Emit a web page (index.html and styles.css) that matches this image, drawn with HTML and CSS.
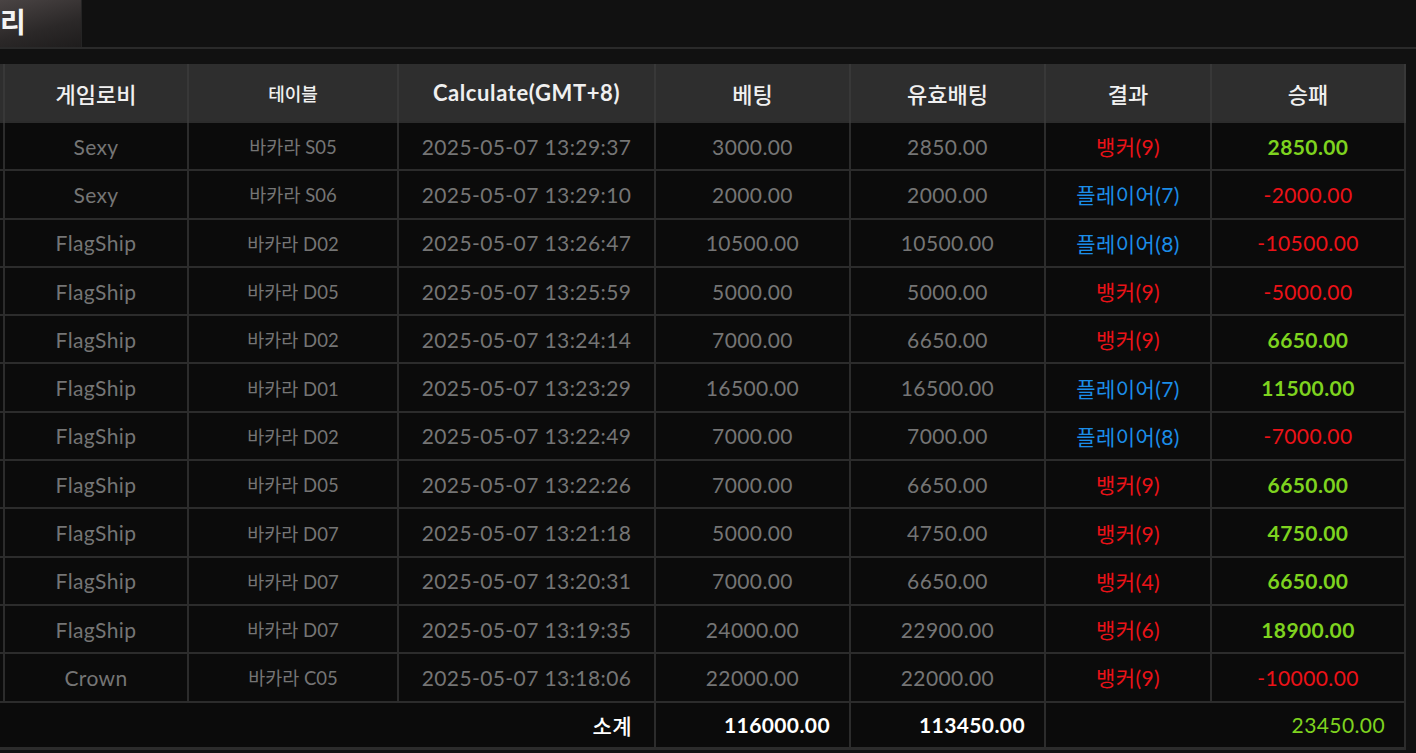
FILE: index.html
```html
<html>
    <head>
        <link rel="stylesheet" href="styles.css">
    </head>
    <body>
        <div id="tabbar">
            <div class="tab active">리</div>
        </div>
        <div id="listWrap">
            <table id="betList">
                <colgroup>
                    <col class="c-no">
                    <col class="c-lobby">
                    <col class="c-table">
                    <col class="c-time">
                    <col class="c-bet">
                    <col class="c-valid">
                    <col class="c-result">
                    <col class="c-win">
                </colgroup>
                <thead>
                    <tr>
                        <th></th>
                        <th>게임로비</th>
                        <th class="small">테이블</th>
                        <th class="en">Calculate(GMT+8)</th>
                        <th>베팅</th>
                        <th>유효배팅</th>
                        <th>결과</th>
                        <th>승패</th>
                    </tr>
                </thead>
                <tbody id="rows"></tbody>
                <tfoot>
                    <tr>
                        <td colspan="4" class="sum-label">소계</td>
                        <td class="sum">116000.00</td>
                        <td class="sum">113450.00</td>
                        <td colspan="2" class="sum win">23450.00</td>
                    </tr>
                </tfoot>
            </table>
        </div>
        <script>
            var bets = [
                ["Sexy","바카라 S05","2025-05-07 13:29:37","3000.00","2850.00","뱅커(9)","2850.00"],
                ["Sexy","바카라 S06","2025-05-07 13:29:10","2000.00","2000.00","플레이어(7)","-2000.00"],
                ["FlagShip","바카라 D02","2025-05-07 13:26:47","10500.00","10500.00","플레이어(8)","-10500.00"],
                ["FlagShip","바카라 D05","2025-05-07 13:25:59","5000.00","5000.00","뱅커(9)","-5000.00"],
                ["FlagShip","바카라 D02","2025-05-07 13:24:14","7000.00","6650.00","뱅커(9)","6650.00"],
                ["FlagShip","바카라 D01","2025-05-07 13:23:29","16500.00","16500.00","플레이어(7)","11500.00"],
                ["FlagShip","바카라 D02","2025-05-07 13:22:49","7000.00","7000.00","플레이어(8)","-7000.00"],
                ["FlagShip","바카라 D05","2025-05-07 13:22:26","7000.00","6650.00","뱅커(9)","6650.00"],
                ["FlagShip","바카라 D07","2025-05-07 13:21:18","5000.00","4750.00","뱅커(9)","4750.00"],
                ["FlagShip","바카라 D07","2025-05-07 13:20:31","7000.00","6650.00","뱅커(4)","6650.00"],
                ["FlagShip","바카라 D07","2025-05-07 13:19:35","24000.00","22900.00","뱅커(6)","18900.00"],
                ["Crown","바카라 C05","2025-05-07 13:18:06","22000.00","22000.00","뱅커(9)","-10000.00"]
            ];
            var tbody = document.getElementById("rows");
            bets.forEach(function(b){
                var tr = document.createElement("tr");
                var html = "<td></td>";
                html += "<td>"+b[0]+"</td>";
                html += "<td class='small'>"+b[1]+"</td>";
                html += "<td>"+b[2]+"</td>";
                html += "<td>"+b[3]+"</td>";
                html += "<td>"+b[4]+"</td>";
                var resCls = b[5].indexOf("뱅커")===0 ? "banker" : "player";
                html += "<td class='"+resCls+"'>"+b[5]+"</td>";
                var winCls = b[6].charAt(0)==="-" ? "lose" : "win";
                html += "<td class='"+winCls+"'>"+b[6]+"</td>";
                tr.innerHTML = html;
                tbody.appendChild(tr);
            });
        </script>
    </body>
</html>
```

FILE: styles.css
```css
*{
    font-family: Lato, "Noto Sans CJK KR", sans-serif;
    box-sizing: border-box;
}
body{
    margin: 0px;
    background-color: #111111;
    color: #eeeeee;
}
#tabbar{
    height: 49px;
    display: flex;
    border-bottom: 2px solid #2a2a2a;
}
.tab{
    width: 82px;
    height: 47px;
    padding-top: 1px;
    font-size: 28px;
    font-weight: bold;
    color: #f4f4f4;
    background: linear-gradient(165deg, #4a4444 0%, #2b2828 60%, #1e1c1c 100%);
    border-right: 1px solid #242424;
}
#listWrap{
    padding-top: 15px;
}
#betList{
    width: 1405px;
    table-layout: fixed;
    border-collapse: collapse;
    background-color: #0b0b0b;
}
.c-no{ width: 4px; }
.c-lobby{ width: 184px; }
.c-table{ width: 210px; }
.c-time{ width: 257px; }
.c-bet{ width: 195px; }
.c-valid{ width: 195px; }
.c-result{ width: 166px; }
.c-win{ width: 194px; }

#betList th{
    height: 58px;
    background-color: #2e2e2e;
    font-size: 22px;
    font-weight: 500;
    color: #f0f0f0;
    border-left: 2px solid #383838;
    border-right: 2px solid #383838;
}
#betList th:first-child, #betList td:first-child{
    border-left: 0px;
}
#betList th.small{
    font-size: 18px;
}
#betList th.en{
    font-weight: bold;
    font-size: 22px;
    letter-spacing: 0.6px;
}
#betList tbody td{
    height: 48.3px;
}
#betList td{
    text-align: center;
    font-size: 21px;
    letter-spacing: 0.4px;
    color: #757575;
    border: 2px solid #2c2c2c;
    white-space: nowrap;
}
#betList td.small{
    font-size: 18.5px;
    letter-spacing: 0px;
}
#betList td.banker, #betList td.lose{
    color: #ec1218;
}
#betList td.player{
    color: #1b8de8;
}
#betList td.win{
    color: #7ed31f;
    font-weight: bold;
}
#betList tfoot td{
    height: 47px;
    text-align: right;
    padding-right: 19px;
    color: #ffffff;
    font-weight: bold;
    border-bottom: 3px solid #2c2c2c;
}
#betList tfoot td.sum-label{
    padding-right: 22px;
    font-weight: 500;
}
#betList tfoot td.win{
    color: #7ed31f;
    font-weight: normal;
}
```
